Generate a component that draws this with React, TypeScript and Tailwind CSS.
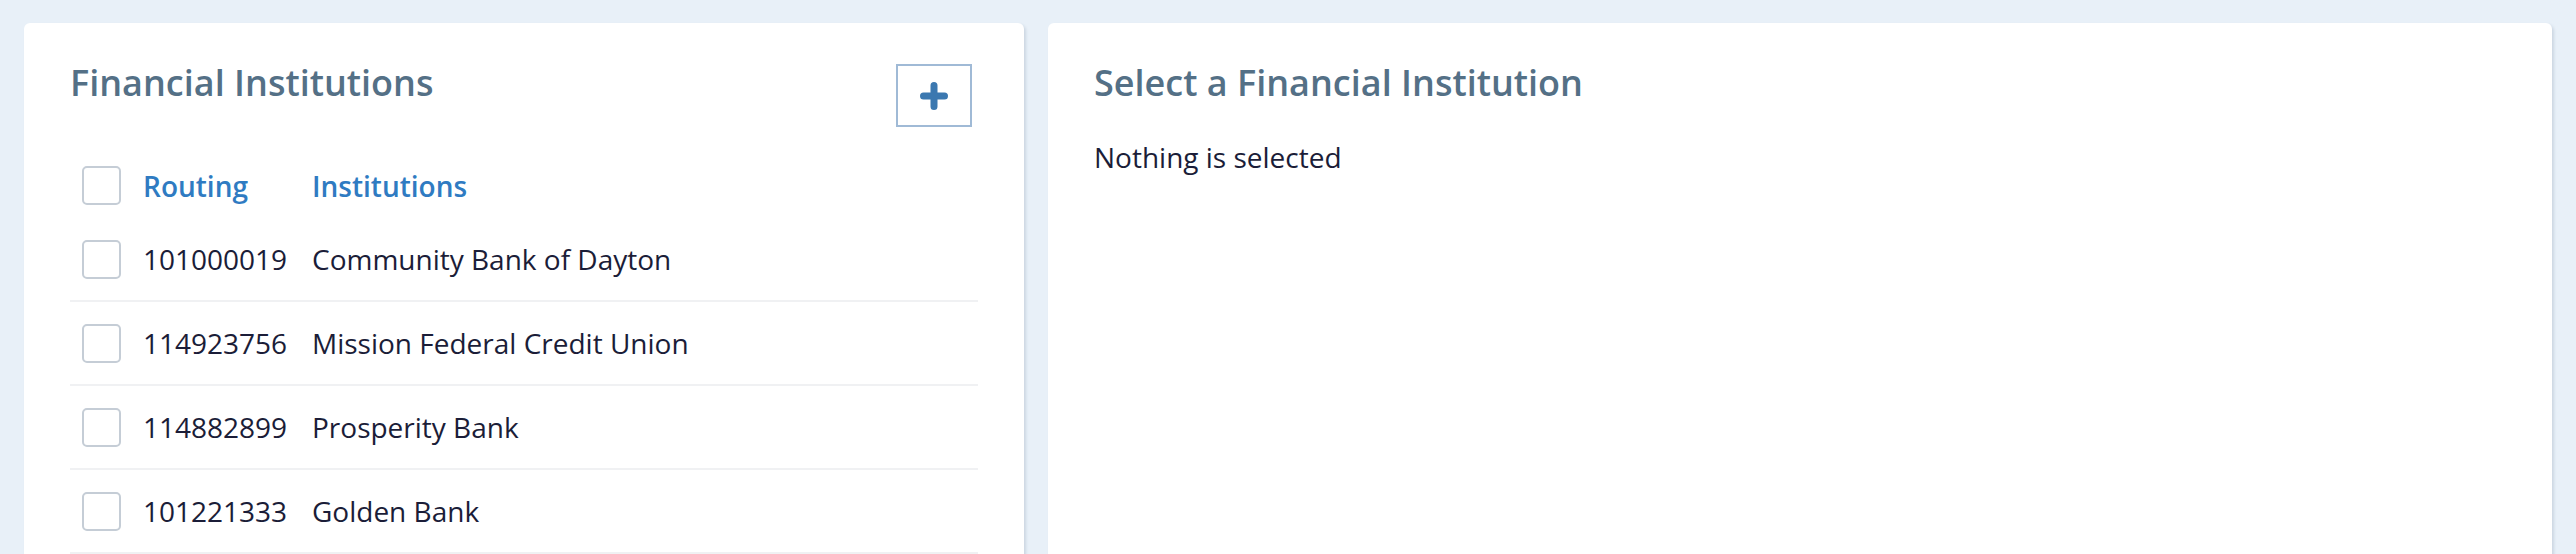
import React from "react";

interface Institution {
  routing: string;
  name: string;
}

const institutions: Institution[] = [
  { routing: "101000019", name: "Community Bank of Dayton" },
  { routing: "114923756", name: "Mission Federal Credit Union" },
  { routing: "114882899", name: "Prosperity Bank" },
  { routing: "101221333", name: "Golden Bank" },
];

function Checkbox() {
  return (
    <span className="block h-[39px] w-[39px] shrink-0 rounded-[5px] border-2 border-[#c5cdd6] bg-white" />
  );
}

function PlusIcon() {
  return (
    <svg width="28" height="28" viewBox="0 0 28 28" fill="none">
      <path
        d="M14 3.5v21M3.5 14h21"
        stroke="#3b78b0"
        strokeWidth="7"
        strokeLinecap="round"
      />
    </svg>
  );
}

export default function App() {
  return (
    <div className="flex h-[554px] gap-6 overflow-hidden bg-[#e8f0f8] px-6 pt-[23px] font-['Open_Sans',sans-serif]">
      {/* list of institutions */}
      <section className="h-[640px] w-[1000px] shrink-0 rounded-md bg-white px-[46px] pt-[37px] shadow-[2px_2px_3px_rgba(80,100,130,0.18)]">
        <div className="flex items-start justify-between">
          <h2 className="pt-px text-[36px] leading-[44px] font-semibold text-[#547086]">
            Financial Institutions
          </h2>
          <button className="mt-1 mr-[6px] flex h-[63px] w-[76px] items-center justify-center border-2 border-[#a0bad6] bg-white">
            <PlusIcon />
          </button>
        </div>

        <div className="mt-[29px] flex h-[62px] items-center pb-[3px] pl-3 text-[28px] font-semibold text-[#2f7bc2]">
          <Checkbox />
          <span className="ml-[22px] w-[169px]">Routing</span>
          <span>Institutions</span>
        </div>

        {institutions.map((inst) => (
          <div
            key={inst.routing}
            className="flex h-[84px] items-center border-b-2 border-[#f0f1f3] pl-3 text-[28px] text-[#1b1d38]"
          >
            <Checkbox />
            <span className="ml-[22px] w-[169px]">{inst.routing}</span>
            <span>{inst.name}</span>
          </div>
        ))}
      </section>

      {/* details */}
      <section className="h-[640px] flex-1 rounded-md bg-white px-[46px] pt-[37px] shadow-[2px_2px_3px_rgba(80,100,130,0.18)]">
        <h2 className="pt-px text-[36px] leading-[44px] font-semibold text-[#547086]">
          Select a Financial Institution
        </h2>
        <p className="mt-[33px] text-[28px] leading-[38px] text-[#1b1d38]">
          Nothing is selected
        </p>
      </section>
    </div>
  );
}
